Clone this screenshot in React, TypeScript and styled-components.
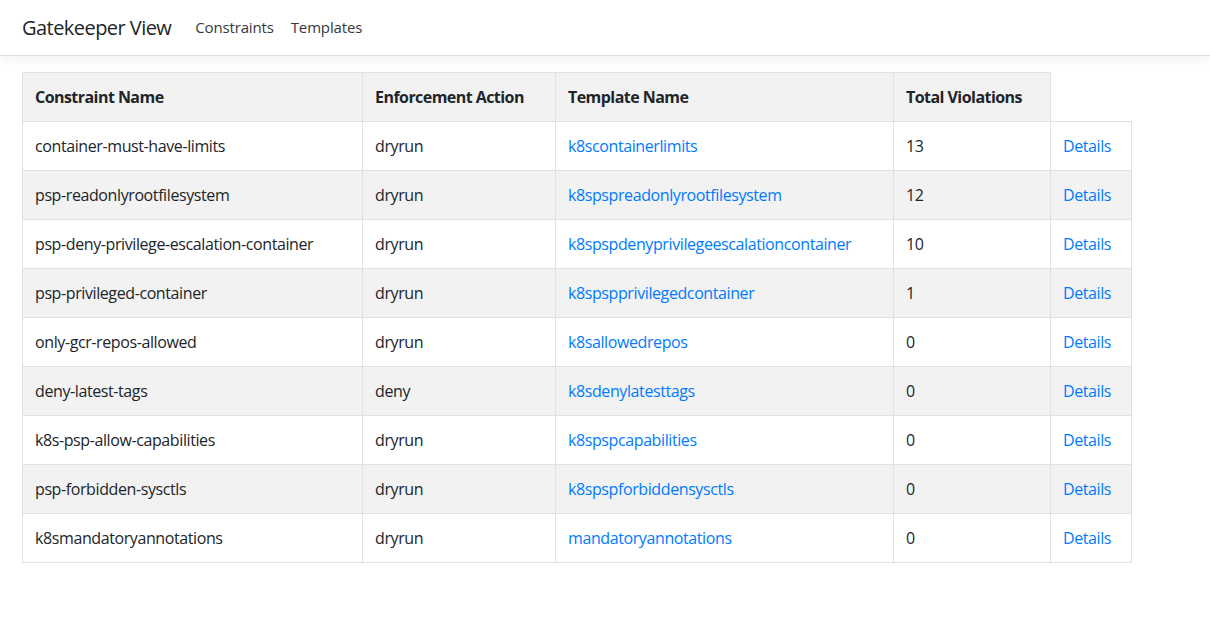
import React from "react";
import styled, { createGlobalStyle } from "styled-components";

const Global = createGlobalStyle`
  html, body { margin: 0; padding: 0; background: #fff; }
  body {
    font-family: "Segoe UI", "Open Sans", "Noto Sans", sans-serif;
    font-size: 16px;
    line-height: 1.5;
    color: #212529;
    letter-spacing: -0.4px;
  }
  * { box-sizing: border-box; }
`;

const NavBar = styled.nav`
  display: flex;
  align-items: center;
  height: 56px;
  padding: 0 22px;
  border-bottom: 1px solid #e0e0e0;
  box-shadow: 0 4px 10px rgba(0, 0, 0, 0.05);
  background: #fff;
`;

const Brand = styled.a`
  font-size: 20px;
  letter-spacing: -0.55px;
  color: #212529;
  text-decoration: none;
  margin-right: 24px;
  white-space: nowrap;
`;

const NavLinks = styled.div`
  display: flex;
  gap: 17px;
`;

const NavLink = styled.a`
  font-size: 15px;
  letter-spacing: -0.15px;
  color: #343a40;
  text-decoration: none;
`;

const Main = styled.main`
  padding: 16px 22px;
`;

const Table = styled.table`
  border-collapse: collapse;
  table-layout: fixed;
  width: 1109px;
`;

const HeadCell = styled.th`
  text-align: left;
  font-weight: 700;
  letter-spacing: -0.55px;
  padding: 12px;
  border: 1px solid #dee2e6;
  background: #f2f2f2;
`;

const Row = styled.tr<{ $striped: boolean }>`
  background: ${(p) => (p.$striped ? "#f2f2f2" : "#fff")};
`;

const Cell = styled.td`
  padding: 12px;
  border: 1px solid #dee2e6;
  white-space: nowrap;
`;

const Link = styled.a`
  color: #007bff;
  text-decoration: none;
`;

const rows = [
  ["container-must-have-limits", "dryrun", "k8scontainerlimits", "13"],
  ["psp-readonlyrootfilesystem", "dryrun", "k8spspreadonlyrootfilesystem", "12"],
  ["psp-deny-privilege-escalation-container", "dryrun", "k8spspdenyprivilegeescalationcontainer", "10"],
  ["psp-privileged-container", "dryrun", "k8spspprivilegedcontainer", "1"],
  ["only-gcr-repos-allowed", "dryrun", "k8sallowedrepos", "0"],
  ["deny-latest-tags", "deny", "k8sdenylatesttags", "0"],
  ["k8s-psp-allow-capabilities", "dryrun", "k8spspcapabilities", "0"],
  ["psp-forbidden-sysctls", "dryrun", "k8spspforbiddensysctls", "0"],
  ["k8smandatoryannotations", "dryrun", "mandatoryannotations", "0"],
];

export default function App() {
  return (
    <>
      <Global />
      <NavBar>
        <Brand href="#">Gatekeeper View</Brand>
        <NavLinks>
          <NavLink href="#">Constraints</NavLink>
          <NavLink href="#">Templates</NavLink>
        </NavLinks>
      </NavBar>
      <Main>
        <Table>
          <colgroup>
            <col style={{ width: 340 }} />
            <col style={{ width: 193 }} />
            <col style={{ width: 338 }} />
            <col style={{ width: 157 }} />
            <col style={{ width: 81 }} />
          </colgroup>
          <thead>
            <tr>
              <HeadCell>Constraint Name</HeadCell>
              <HeadCell>Enforcement Action</HeadCell>
              <HeadCell>Template Name</HeadCell>
              <HeadCell>Total Violations</HeadCell>
            </tr>
          </thead>
          <tbody>
            {rows.map((r, i) => (
              <Row key={r[0]} $striped={i % 2 === 1}>
                <Cell>{r[0]}</Cell>
                <Cell>{r[1]}</Cell>
                <Cell>
                  <Link href="#">{r[2]}</Link>
                </Cell>
                <Cell>{r[3]}</Cell>
                <Cell>
                  <Link href="#">Details</Link>
                </Cell>
              </Row>
            ))}
          </tbody>
        </Table>
      </Main>
    </>
  );
}
